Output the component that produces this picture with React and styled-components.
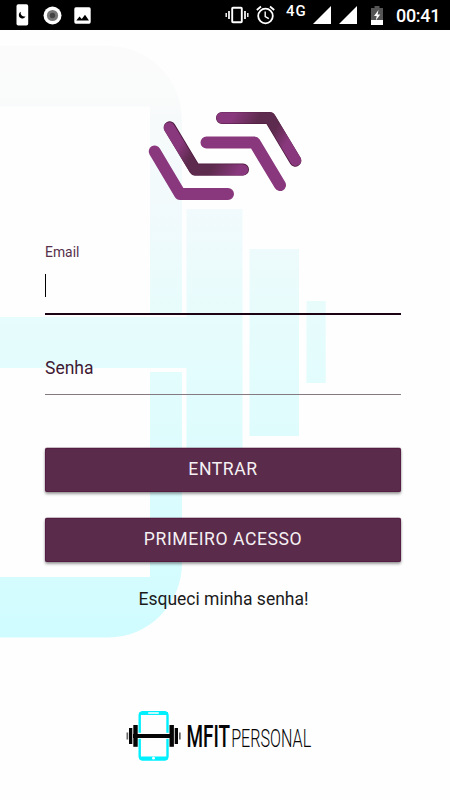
import React from "react";
import styled, { createGlobalStyle } from "styled-components";

const GlobalStyle = createGlobalStyle`
  *, *::before, *::after { box-sizing: border-box; }
  body { margin: 0; background: #fff; font-family: Roboto, "Liberation Sans", sans-serif; }
`;

const Screen = styled.div`
  position: relative;
  width: 450px;
  height: 800px;
  display: flex;
  flex-direction: column;
  overflow: hidden;
  background: #fefefe;
`;

const Backdrop = styled.svg`
  position: absolute;
  inset: 0;
  z-index: 0;
`;

const StatusBar = styled.header`
  position: relative;
  z-index: 1;
  flex: none;
  height: 30px;
  padding: 0 11px 0 16px;
  display: flex;
  align-items: center;
  justify-content: space-between;
  background: #000;
  color: #fff;
`;

const StatusGroup = styled.div`
  display: flex;
  align-items: center;
  height: 30px;
`;

const StatusIcon = styled.svg`
  flex: none;
  display: block;
  margin-left: ${(p) => p.$gap || 0}px;
`;

const Network = styled.span`
  width: 21px;
  margin: -8px 0 0 11px;
  font-size: 15px;
  line-height: 16px;
  font-weight: 500;
  letter-spacing: 0.9px;
`;

const Clock = styled.time`
  width: 43px;
  margin: 2px 0 0 13px;
  font-size: 18px;
  line-height: 22px;
  font-weight: 500;
  letter-spacing: -0.3px;
  white-space: nowrap;
`;

const Main = styled.main`
  position: relative;
  z-index: 1;
  flex: 1;
  display: flex;
  flex-direction: column;
  padding: 76px 49px 0 45px;
`;

const Emblem = styled.svg`
  display: block;
  flex: none;
  margin-left: 99px;
`;

const Form = styled.form`
  display: flex;
  flex-direction: column;
  margin-top: 36px;
`;

const Field = styled.label`
  display: flex;
  flex-direction: column;
  height: ${(p) => p.$height}px;
  border-bottom: ${(p) => (p.$active ? "2px solid #1c0313" : "1px solid #857a82")};
`;

const FieldLabel = styled.span`
  font-size: ${(p) => (p.$small ? 13.9 : 17.5)}px;
  line-height: 20px;
  margin-top: ${(p) => (p.$small ? 0 : 43)}px;
  color: ${(p) => (p.$small ? "#56304a" : "#3f1a34")};
`;

const Caret = styled.span`
  width: 1px;
  height: 23px;
  margin-top: 12px;
  background: #000;
`;

const Button = styled.button`
  height: 44px;
  margin-top: ${(p) => p.$gap}px;
  padding: 0 0 2px;
  border: 0;
  border-radius: 2px;
  background: #5a2b4a;
  box-shadow: inset 0 0 0 1px rgba(75, 10, 52, 0.4), 0 -0.5px 0 rgba(90, 43, 74, 0.5), 0 2px 3px rgba(0, 0, 0, 0.38), 0 0 2px rgba(0, 0, 0, 0.2);
  color: #f5f0f3;
  font: 400 17.6px/22px Roboto, sans-serif;
  letter-spacing: 0.55px;
`;

const Forgot = styled.a`
  margin: 26px 0 0 1px;
  align-self: center;
  font-size: 17.5px;
  line-height: 22px;
  color: #1b1b1b;
`;

const Brand = styled.svg`
  flex: none;
  display: block;
  margin: 96px 0 0 75px;
  overflow: visible;
`;

const BrandText = styled.text`
  font-family: Roboto, sans-serif;
  font-size: ${(p) => p.$size}px;
  font-weight: ${(p) => p.$weight};
  fill: #050505;
`;

function Watermark() {
  return (
    <Backdrop width="450" height="800" viewBox="0 0 450 800" aria-hidden="true">
      <defs>
        <linearGradient id="wash" gradientUnits="userSpaceOnUse" x1="0" y1="46" x2="0" y2="638">
          <stop offset="0" stopColor="#fbfbfb" />
          <stop offset="0.08" stopColor="#fafbfb" />
          <stop offset="0.12" stopColor="#f7fafb" />
          <stop offset="0.28" stopColor="#f1fafc" />
          <stop offset="0.46" stopColor="#e7fcfc" />
          <stop offset="0.65" stopColor="#dffcfd" />
          <stop offset="1" stopColor="#d0fcff" />
        </linearGradient>
      </defs>
      <g fill="url(#wash)">
        <path d="M0 46H108C149 46 182 79 182 120V313H150V106.500H0Z" />
        <path d="M0 317H186.500V209H242.500V476H186.500V368H0Z" />
        <path d="M150 372H182V563C182 604 149 637.500 108 637.500H0V577H150Z" />
        <path d="M249.500 249H299V436H249.500Z" />
        <path d="M306.500 301H325.700V383H306.500Z" />
      </g>
    </Backdrop>
  );
}

function Logo() {
  return (
    <Emblem width="160" height="100" viewBox="144 106 160 100" aria-label="Logo">
      <defs>
        <linearGradient id="upper" gradientUnits="userSpaceOnUse" x1="225" y1="130" x2="292" y2="170">
          <stop offset="0" stopColor="#89387d" />
          <stop offset="0.3" stopColor="#5d2b4d" />
          <stop offset="0.54" stopColor="#5d2b4d" />
          <stop offset="0.76" stopColor="#89387d" />
        </linearGradient>
        <linearGradient id="lower" gradientUnits="userSpaceOnUse" x1="172" y1="135" x2="238" y2="175">
          <stop offset="0.15" stopColor="#89387d" />
          <stop offset="0.36" stopColor="#5d2b4d" />
          <stop offset="0.66" stopColor="#5d2b4d" />
          <stop offset="0.98" stopColor="#89387d" />
        </linearGradient>
      </defs>
      <g fill="none" strokeLinecap="round" strokeLinejoin="round" strokeWidth="12">
        <g stroke="#4b173b">
          <path d="M222 118H269.800L295.300 160.700" />
          <path d="M169.700 127.300L195 169.500H243" />
        </g>
        <g strokeWidth="11.200">
          <path stroke="url(#upper)" d="M221.900 117.800H269.900L295.600 160.300" />
          <path stroke="url(#lower)" d="M169.300 127.800L194.900 169.800H242.600" />
        </g>
        <g stroke="#89387d">
          <path d="M206.500 142.400H254.400L280 185" />
          <path d="M154.700 151.500L180 194H228" />
        </g>
      </g>
    </Emblem>
  );
}

function BrandMark() {
  return (
    <Brand width="200" height="56" viewBox="120 706 200 56" role="img" aria-label="MFIT Personal">
      <rect x="139.700" y="712.200" width="27.800" height="47.400" rx="3" fill="#fefefe" stroke="#00f0ff" strokeWidth="2.400" />
      <path fill="#00f0ff" d="M139.500 712H168V715H139.500ZM139.500 756.500H168V759.500H139.500Z" />
      <rect x="148" y="712.300" width="11" height="1.500" rx="0.700" fill="#fff" />
      <circle cx="153.500" cy="758.200" r="1.400" fill="#fff" />
      <g fill="#050505">
        <rect x="137" y="732.800" width="33" height="6" fill="#fff" />
        <rect x="133" y="734" width="40" height="4" />
        <rect x="133.300" y="725" width="4.400" height="21.800" />
        <rect x="129" y="728" width="3.300" height="16" />
        <rect x="126.500" y="732.500" width="1.700" height="7" fill="#666" />
        <rect x="169.500" y="725" width="4.400" height="21.800" />
        <rect x="174.700" y="728" width="3.300" height="16" />
        <rect x="179" y="732.500" width="1.700" height="7" fill="#666" />
      </g>
      <BrandText x="186.500" y="747" $size={31} $weight={500} textLength="43.500" lengthAdjust="spacingAndGlyphs">MFIT</BrandText>
      <BrandText x="231.200" y="747" $size={26.3} $weight={300} textLength="80" lengthAdjust="spacingAndGlyphs">PERSONAL</BrandText>
    </Brand>
  );
}

export default function App() {
  return (
    <>
      <GlobalStyle />
      <Screen>
        <Watermark />
        <StatusBar>
          <StatusGroup>
            <StatusIcon width="13" height="22" viewBox="0 0 13 22">
              <rect x="0.500" y="0.300" width="11.700" height="21.300" rx="1.800" fill="#fff" />
              <path d="M4.800 7.800A3.500 3.500 0 1 0 9.500 12.400A3.700 3.700 0 0 1 4.800 7.800Z" fill="#000" />
            </StatusIcon>
            <StatusIcon $gap={14} width="19" height="19" viewBox="0 0 19 19">
              <circle cx="9.500" cy="9.500" r="9" fill="#fff" />
              <circle cx="9.500" cy="9.500" r="5.600" fill="#777" />
              <circle cx="9.500" cy="9.500" r="2.700" fill="#444" />
            </StatusIcon>
            <StatusIcon $gap={12} width="17" height="17" viewBox="0 0 17 17">
              <rect x="0.300" y="0.300" width="16.400" height="16.400" rx="1.600" fill="#fff" />
              <path d="M2.300 13.500L5.500 9.500L7.800 12L11 7.800L15 13.500Z" fill="#000" />
            </StatusIcon>
          </StatusGroup>
          <StatusGroup>
            <StatusIcon width="24" height="18" viewBox="0 0 24 18" fill="none" stroke="#fff">
              <rect x="7.200" y="1.800" width="9.600" height="14.400" rx="0.800" strokeWidth="1.900" />
              <path d="M4 5V13M20 5V13" strokeWidth="1.700" />
              <path d="M1.200 7V11M22.800 7V11" strokeWidth="1.400" />
            </StatusIcon>
            <StatusIcon $gap={7} width="19" height="20" viewBox="0 0 19 20" fill="none" stroke="#fff">
              <circle cx="9.500" cy="11" r="7.300" strokeWidth="1.800" />
              <path d="M0.800 5L5 1.500M18.200 5L14 1.500" strokeWidth="1.800" />
              <path d="M9.200 6.500V11.500L12.800 13.700" strokeWidth="1.400" />
            </StatusIcon>
            <Network>4G</Network>
            <StatusIcon $gap={6} width="18" height="18" viewBox="0 0 18 18"><path d="M0 18L18 0V18Z" fill="#fff" /></StatusIcon>
            <StatusIcon $gap={8} width="18" height="18" viewBox="0 0 18 18"><path d="M0 18L18 0V18Z" fill="#fff" /></StatusIcon>
            <StatusIcon $gap={14} width="12" height="19" viewBox="0 0 12 19">
              <path d="M0 2H3.500V0H8.500V2H12V14H0Z" fill="#555" />
              <path d="M0 14H12V19H0Z" fill="#fff" />
              <path d="M7.500 4L3 10H5.700L4.800 14.500L9.300 8.500H6.600Z" fill="#fff" />
            </StatusIcon>
            <Clock>00:41</Clock>
          </StatusGroup>
        </StatusBar>
        <Main>
          <Logo />
          <Form onSubmit={(e) => e.preventDefault()}>
            <Field $height={73} $active>
              <FieldLabel $small>Email</FieldLabel>
              <Caret />
            </Field>
            <Field $height={80}>
              <FieldLabel>Senha</FieldLabel>
            </Field>
            <Button $gap={53}>ENTRAR</Button>
            <Button $gap={26}>PRIMEIRO ACESSO</Button>
            <Forgot>Esqueci minha senha!</Forgot>
          </Form>
          <BrandMark />
        </Main>
      </Screen>
    </>
  );
}
